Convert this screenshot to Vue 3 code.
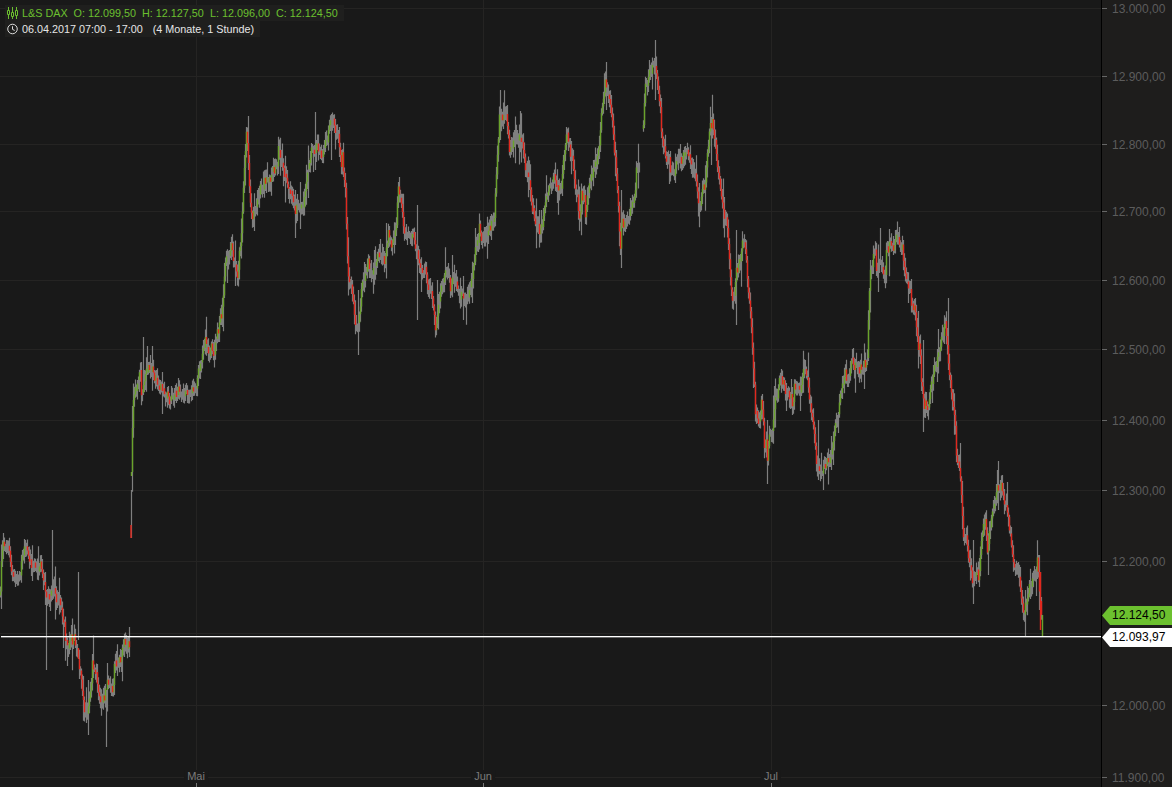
<template>
  <div class="terminal">
    <div class="chart">
      <svg class="plot" width="1101" height="787" viewBox="0 0 1101 787">
        <path class="grid" :d="gridPath" />
        <path class="month-tick" :d="monthTicks" />
        <path class="wick" :d="bars.wick" />
        <path class="up" :d="bars.up" />
        <path class="down" :d="bars.down" />
      </svg>

      <span
        v-for="m in months"
        :key="m.label"
        class="month"
        :style="{ left: m.x + 'px' }"
      >{{ m.label }}</span>

      <div class="legend">
        <div class="legend-row quote">
          <svg class="legend-icon" width="11" height="12" viewBox="0 0 11 12">
            <path d="M1.5 0v12M5.5 0v12M9.5 0v12" stroke="#6cc02f" stroke-width="1" fill="none" />
            <path d="M.5 3.5h2v4h-2zM4.5 5.5h2v4h-2zM8.5 3.5h2v5h-2z" stroke="#6cc02f" stroke-width="1" fill="#191919" />
          </svg>
          <span class="pad">L&amp;S DAX</span>
          <span class="pad">O: 12.099,50</span>
          <span class="pad">H: 12.127,50</span>
          <span class="pad">L: 12.096,00</span>
          <span>C: 12.124,50</span>
        </div>
        <div class="legend-row range">
          <svg class="legend-icon" width="11" height="12" viewBox="0 0 12 12">
            <circle cx="6" cy="6" r="5.2" stroke="#eee" stroke-width="1" fill="none" />
            <path d="M6 3v3.4l2.4 1.2" stroke="#eee" stroke-width="1" fill="none" />
          </svg>
          <span class="pad">06.04.2017 07:00 - 17:00</span>
          <span>(4 Monate, 1 Stunde)</span>
        </div>
      </div>

      <div class="cursor-line"></div>
    </div>

    <div class="axis">
      <div
        v-for="t in ticks"
        :key="t.label"
        class="tick"
        :style="{ top: t.y - 7 + 'px' }"
      >
        <i class="tick-mark"></i>
        <span>{{ t.label }}</span>
      </div>
      <div class="flag flag-close">12.124,50</div>
      <div class="flag flag-cursor">12.093,97</div>
    </div>
  </div>
</template>

<script setup>
const ticks = [
  { label: '13.000,00', y: 8 },
  { label: '12.900,00', y: 76 },
  { label: '12.800,00', y: 144 },
  { label: '12.700,00', y: 211 },
  { label: '12.600,00', y: 280 },
  { label: '12.500,00', y: 349 },
  { label: '12.400,00', y: 420 },
  { label: '12.300,00', y: 490 },
  { label: '12.200,00', y: 561 },
  { label: '12.000,00', y: 705 },
  { label: '11.900,00', y: 777 }
];

const months = [
  { label: 'Mai', x: 196 },
  { label: 'Jun', x: 483 },
  { label: 'Jul', x: 771 }
];

const extraGrid = [633];

const gridPath =
  [...ticks.map((t) => t.y), ...extraGrid].map((y) => `M0 ${y + 0.5}H1101`).join('') +
  months.map((m) => `M${m.x + 0.5} 0V787`).join('');

const monthTicks = months.map((m) => `M${m.x + 0.5} 783V787`).join('');

// rough trace of the price curve, [x, y] in pixels
const trace = [
  [0, 600], [3, 560], [8, 552], [14, 570], [20, 560], [25, 535], [30, 555], [38, 570], [45, 572],
  [50, 590], [55, 585], [62, 605], [70, 625], [75, 640], [80, 660], [85, 695], [88, 722], [92, 690],
  [97, 685], [103, 712], [108, 685], [113, 690], [118, 680], [125, 655], [130, 650],
  null,
  [131, 530], [133, 430], [137, 405], [141, 378], [150, 372], [160, 380], [170, 392], [180, 385],
  [190, 395], [197, 380], [205, 342], [215, 348], [222, 320], [226, 262], [232, 252], [238, 280],
  [242, 230], [247, 138], [250, 190], [253, 225], [260, 205], [265, 180], [272, 168], [280, 172],
  [290, 178], [296, 210], [305, 190], [312, 160], [318, 148], [325, 152], [333, 132], [338, 145],
  [342, 170], [346, 210], [348, 270], [352, 290], [357, 335], [362, 290], [368, 270], [378, 245],
  [385, 270], [392, 255], [398, 228], [405, 250], [415, 250], [422, 265], [430, 285], [436, 305],
  [445, 280], [455, 270], [462, 285], [470, 290], [476, 260], [482, 250], [490, 232], [495, 215],
  [496, 190], [500, 112], [506, 122], [512, 140], [520, 135], [527, 175], [532, 215], [540, 235],
  [548, 205], [555, 190], [562, 195], [567, 140], [573, 170], [580, 225], [586, 215], [592, 170],
  [600, 145], [606, 78], [612, 130], [616, 170], [620, 240], [626, 215], [632, 190], [640, 175],
  null,
  [643, 140], [646, 90], [651, 72], [656, 54], [660, 90], [663, 130], [668, 155], [675, 180],
  [685, 160], [695, 155], [700, 190], [705, 190], [711, 128], [716, 165], [722, 220], [727, 240],
  [733, 300], [738, 260], [745, 235], [748, 280], [752, 340], [756, 420], [762, 420], [768, 440],
  [775, 410], [782, 378], [790, 395], [800, 380], [808, 372], [814, 410], [818, 462], [825, 450],
  [830, 450], [838, 400], [845, 385], [852, 372], [862, 365], [868, 340], [871, 270], [875, 248],
  [885, 255], [895, 250], [903, 248], [908, 290], [915, 300], [920, 350], [925, 410], [932, 390],
  [940, 360], [946, 328], [950, 370], [955, 400], [960, 450], [964, 530], [970, 560], [973, 590],
  [980, 540], [988, 510], [995, 492], [1002, 488], [1008, 510], [1014, 550], [1020, 578], [1025, 615],
  [1030, 590], [1038, 572], [1042, 628]
];

// single long wicks that stick out of the curve
const spikes = {
  46: [590, 670], 52: [530, 600], 78: [572, 640], 106: [690, 747], 88: [680, 735], 143: [337, 395],
  131: [490, 538], 295: [190, 238], 358: [290, 355], 417: [205, 320], 437: [280, 328], 500: [90, 140],
  606: [62, 110], 621: [190, 268], 711: [117, 165], 736: [230, 325], 767: [420, 484], 818: [420, 480],
  880: [228, 265], 923: [340, 432], 948: [298, 370], 973: [540, 604], 998: [461, 510],
  1025: [590, 636], 1039: [555, 610], 655: [40, 100], 248: [116, 170], 315: [112, 170], 331: [114, 160]
};

function buildBars() {
  let seed = 7321;
  const rnd = () => {
    seed = (seed * 16807) % 2147483647;
    return seed / 2147483647;
  };
  let wick = '';
  let up = '';
  let down = '';
  let wiggle = 0;
  let prev = null;

  for (let i = 0; i < trace.length - 1; i++) {
    const a = trace[i];
    const b = trace[i + 1];
    if (!a || !b) {
      prev = null;
      continue;
    }
    for (let x = a[0]; x < b[0]; x++) {
      const t = (x + 1 - a[0]) / (b[0] - a[0]);
      wiggle = wiggle * 0.84 + (rnd() - 0.5) * 15;
      if (rnd() > 0.9) wiggle += (rnd() - 0.5) * 40;
      const close = a[1] + (b[1] - a[1]) * t + wiggle;
      const open = prev === null ? close + 4 : prev;
      prev = close;
      const top = Math.min(open, close);
      const bottom = Math.max(open, close);
      const big = rnd() > 0.8 ? 24 : 8;
      let hi = top - rnd() * big - 2;
      let lo = bottom + rnd() * big + 2;
      if (spikes[x]) [hi, lo] = spikes[x];
      const cx = x + 0.5;
      wick += `M${cx} ${hi.toFixed(1)}V${lo.toFixed(1)}`;
      // short bodies vanish in the grey wick, only real moves show colour
      if (bottom - top < 4) continue;
      const seg = `M${cx} ${top.toFixed(1)}V${bottom.toFixed(1)}`;
      if (close < open) up += seg;
      else down += seg;
    }
  }
  // first bar after the gap and the last one are easy to see, so place them by hand
  down += 'M131 525V538M1040.5 572V630';
  up += 'M1042.5 615V636';
  return { wick, up, down };
}

const bars = buildBars();
</script>

<style scoped>
.terminal {
  display: flex;
  width: 1172px;
  height: 787px;
  overflow: hidden;
  font-family: "Liberation Sans", Arial, sans-serif;
  font-size: 10.8px;
  background: #191919;
}

.chart {
  position: relative;
  width: 1101px;
  height: 787px;
  flex: none;
}

.plot {
  display: block;
}

.grid {
  stroke: #252423;
  stroke-width: 1;
  fill: none;
}

.month-tick {
  stroke: #777;
  stroke-width: 1;
}

.wick {
  stroke: #7f7f7f;
  stroke-width: 1.2;
  fill: none;
}

.up {
  stroke: #6aa32b;
  stroke-width: 1.4;
  fill: none;
}

.down {
  stroke: #e1281e;
  stroke-width: 1.4;
  fill: none;
}

.month {
  position: absolute;
  top: 770px;
  transform: translateX(-50%);
  padding: 0 3px;
  color: #7b7b7b;
  font-size: 11px;
  line-height: 13px;
  background: #191919;
}

.legend {
  position: absolute;
  top: 5px;
  left: 5px;
  display: flex;
  flex-direction: column;
  align-items: flex-start;
  white-space: nowrap;
}

.legend-row {
  display: flex;
  align-items: center;
  height: 16px;
  padding: 0 6px 0 2px;
  background: #1f1f1e;
}

.legend-icon {
  flex: none;
  margin-right: 4px;
}

.quote {
  color: #6cc02f;
}

.range {
  color: #e6e6e6;
}

.quote .pad {
  margin-right: 6px;
}

.range .pad {
  margin-right: 10px;
}

.cursor-line {
  position: absolute;
  top: 636px;
  left: 1px;
  right: 0;
  height: 1px;
  background: #fff;
  box-shadow: 0 1px 0 rgba(255, 255, 255, 0.35);
}

.axis {
  position: relative;
  flex: 1;
  height: 787px;
  box-sizing: border-box;
  border-left: 1px solid #000;
  background: #1e1d1c;
}

.tick {
  position: absolute;
  left: 0;
  right: 0;
  display: flex;
  align-items: center;
  height: 15px;
  color: #5c5c5c;
  font-size: 12px;
}

.tick-mark {
  width: 5px;
  height: 1px;
  margin-right: 5px;
  background: #666;
}

.flag {
  position: absolute;
  left: 0;
  right: 0;
  height: 19px;
  padding-left: 10px;
  color: #000;
  font-size: 12px;
  line-height: 19px;
  clip-path: polygon(0 50%, 8px 0, 100% 0, 100% 100%, 8px 100%);
}

.flag-close {
  top: 606px;
  background: #6cc02f;
}

.flag-cursor {
  top: 628px;
  background: #fff;
}
</style>
